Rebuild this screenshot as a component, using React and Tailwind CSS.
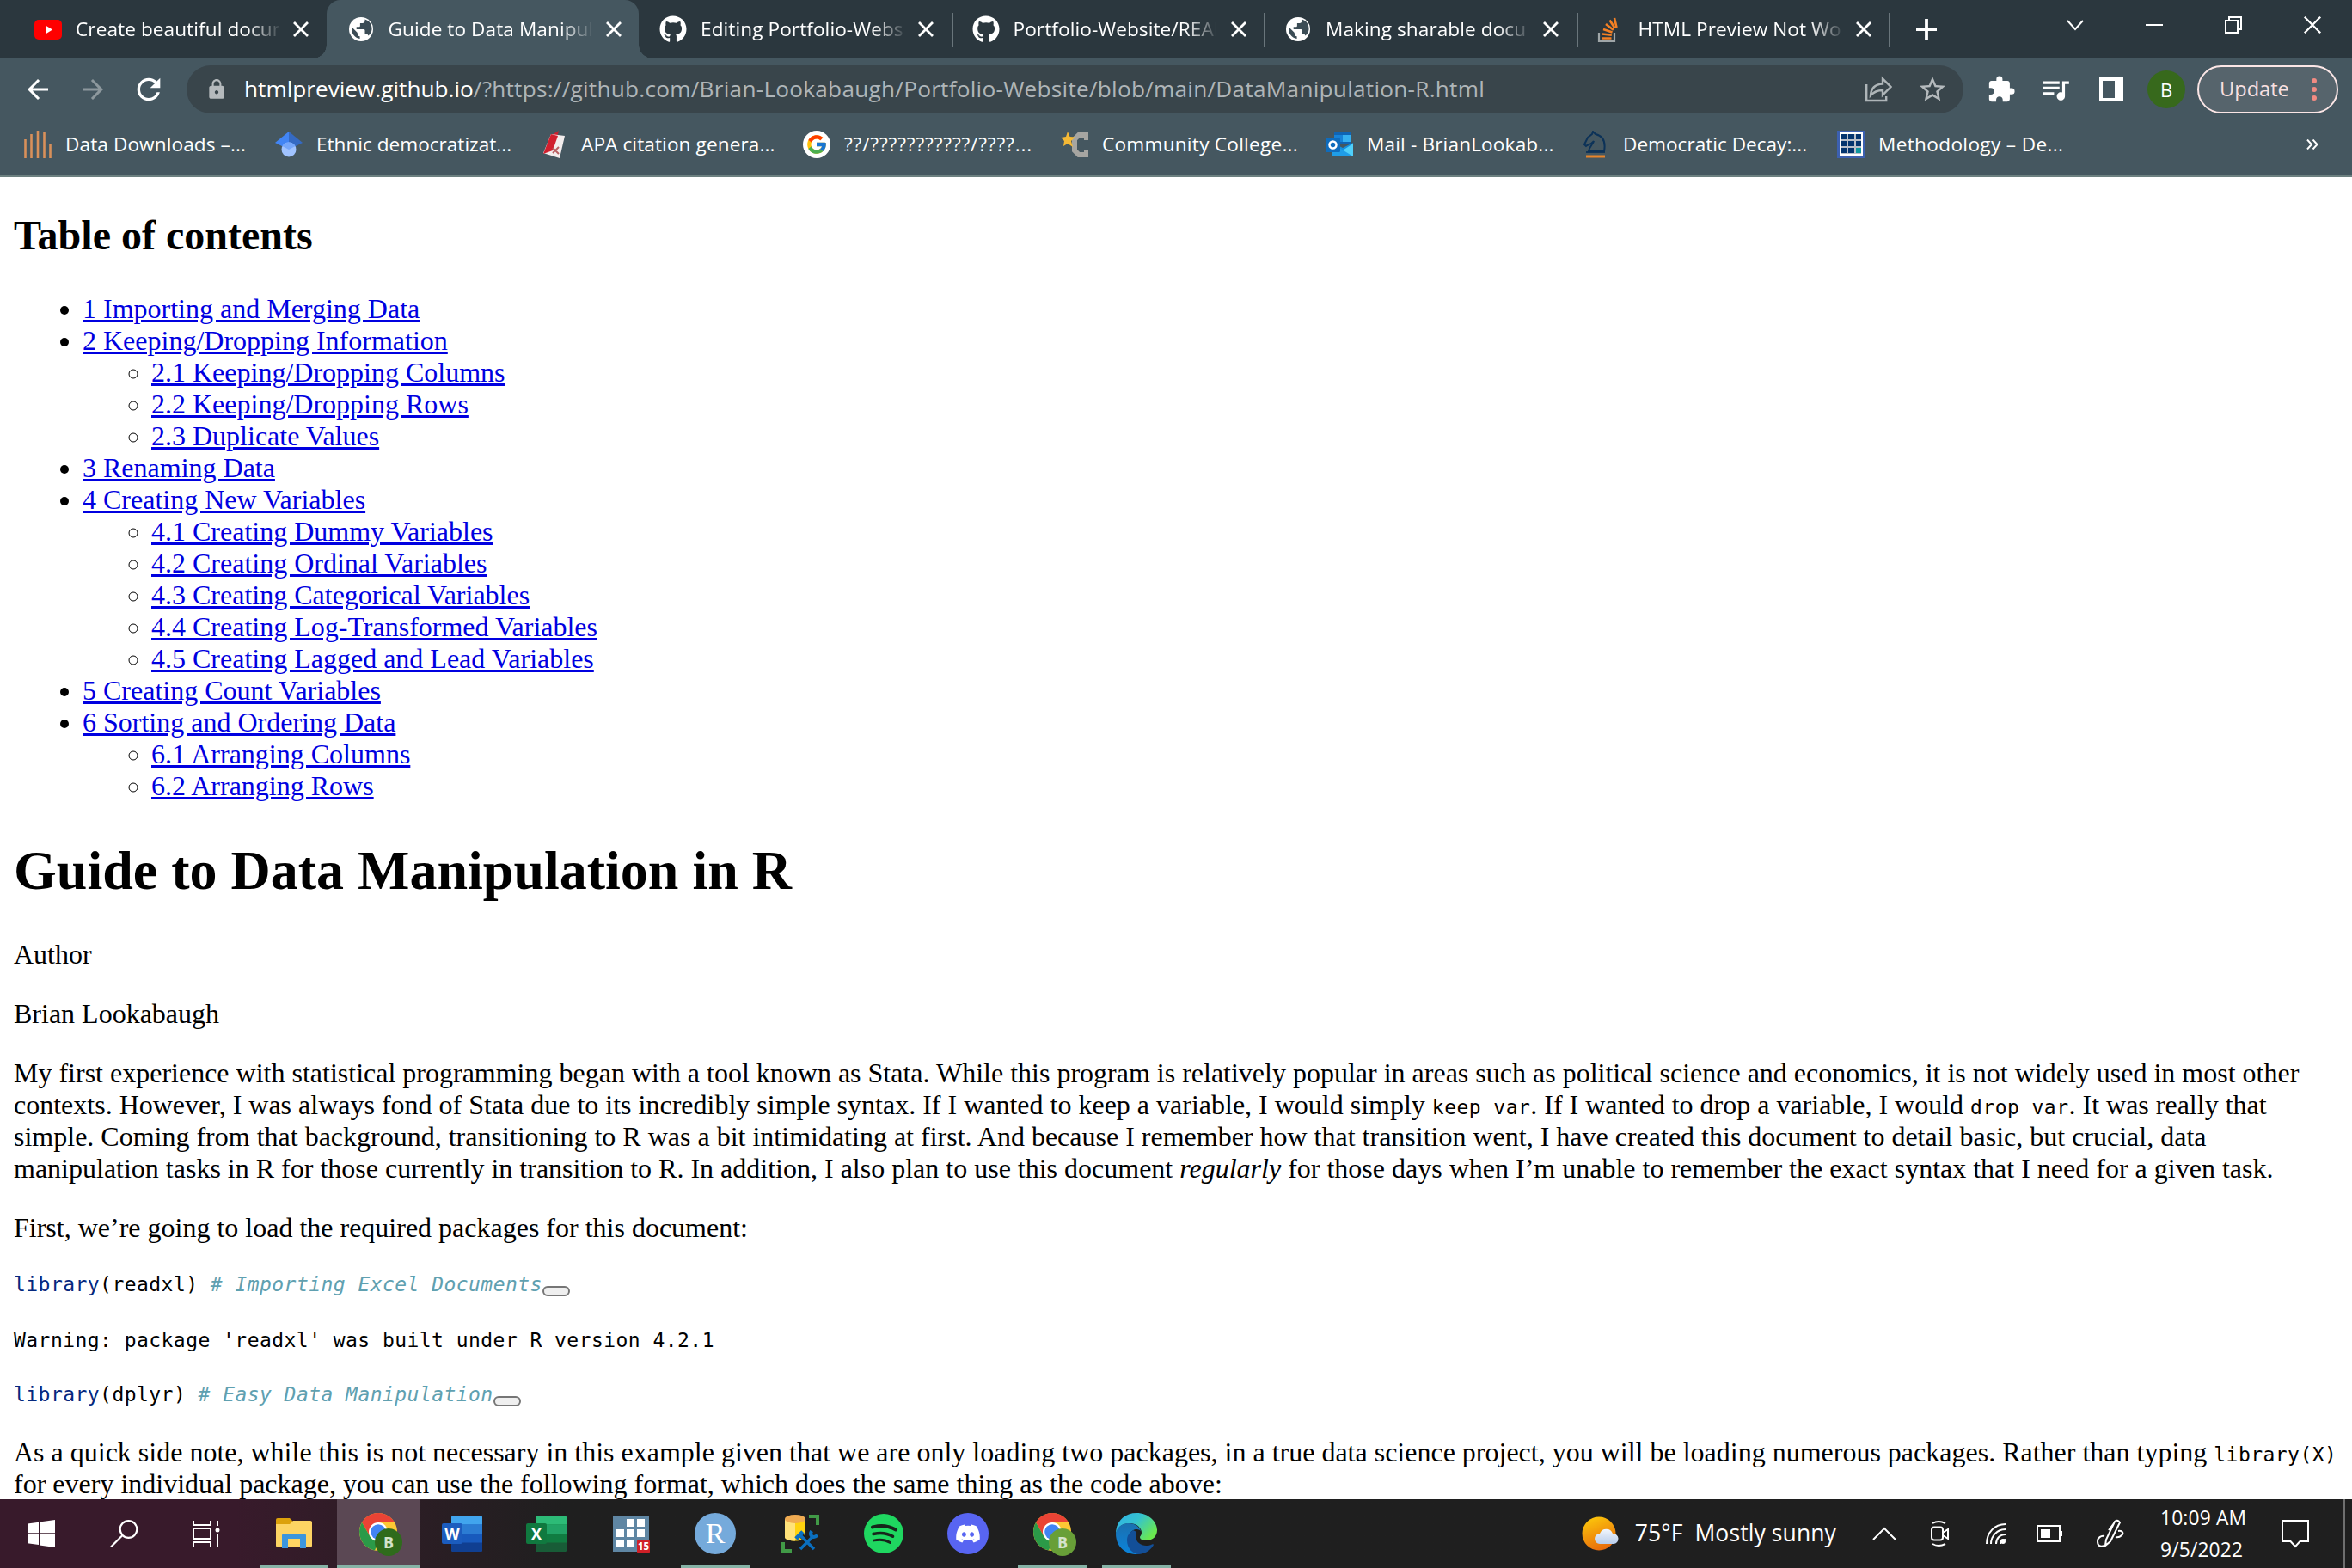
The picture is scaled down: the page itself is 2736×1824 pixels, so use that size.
import React from "react";
import { FaDiscord, FaGithub } from "react-icons/fa";
import { FcGoogle } from "react-icons/fc";
import {
  MdArrowBack,
  MdArrowForward,
  MdExtension,
  MdLock,
  MdQueueMusic,
  MdRefresh,
  MdStarBorder,
} from "react-icons/md";

function classNames(...classes) {
  return classes.filter(Boolean).join(" ");
}

const YoutubeIcon = () => (
  <svg viewBox="0 0 32 32" className="size-8">
    <rect x="0" y="5" width="32" height="23" rx="5" fill="#ff0000" />
    <path d="M13 11.500v10l8-5z" fill="#fff" />
  </svg>
);

const GlobeIcon = () => (
  <svg viewBox="0 0 32 32" className="size-8">
    <circle cx="16" cy="16" r="14" fill="#fff" />
    <path
      d="M20.500 4.500v1.800c0 1.500-1.200 2.800-2.800 2.800h-2.800v2.800c0 .8-.6 1.400-1.400 1.400h-2.800V16h8.400c.8 0 1.400.6 1.400 1.400v4.200h1.400c1.300 0 2.300.8 2.700 1.900a11 11 0 0 0-4.100-19zM5.300 13.500A11.200 11.200 0 0 0 14.600 27v-2.700c-1.500 0-2.800-1.200-2.800-2.800v-1.400z"
      fill="#3b4c55"
    />
  </svg>
);

const StackIcon = () => (
  <svg viewBox="0 0 32 32" className="size-8">
    <path d="M2 20v10h18V20" fill="none" stroke="#9fa6a8" strokeWidth="2.200" />
    <g stroke="#f48024" strokeWidth="2.600">
      <path d="M5.500 26.500h11M5.800 21.500l11 1.200M7 16l10.500 3.500M10 10l8.800 6.800M14.500 5.500l6 9.300M20 3l2.500 11" />
    </g>
  </svg>
);

const tabs = [
  { title: "Create beautiful documents", icon: <YoutubeIcon /> },
  { title: "Guide to Data Manipulation", icon: <GlobeIcon />, active: true },
  {
    title: "Editing Portfolio-Website",
    icon: <FaGithub className="size-8" />,
    divider: true,
  },
  {
    title: "Portfolio-Website/README",
    icon: <FaGithub className="size-8" />,
    divider: true,
  },
  { title: "Making sharable documents", icon: <GlobeIcon />, divider: true },
  { title: "HTML Preview Not Working", icon: <StackIcon />, divider: true },
];

const Cross = ({ className }) => (
  <svg
    viewBox="0 0 20 20"
    className={className}
    fill="none"
    stroke="currentColor"
  >
    <path d="M2 2l16 16M18 2L2 18" />
  </svg>
);

const TabStrip = () => (
  <div className="flex h-[68px] bg-[#2b373e] pl-4 text-white">
    {tabs.map((tab) => (
      <div
        key={tab.title}
        className={classNames(
          "relative flex h-[68px] w-[363.500px] shrink-0 items-center pl-6",
          tab.active && "rounded-t-2xl bg-[#455760]"
        )}
      >
        {tab.active && (
          <>
            <span className="absolute bottom-0 -left-4 size-4 bg-[radial-gradient(circle_at_0_0,transparent_15.500px,#455760_16px)]" />
            <span className="absolute -right-4 bottom-0 size-4 bg-[radial-gradient(circle_at_100%_0,transparent_15.500px,#455760_16px)]" />
          </>
        )}
        {tab.icon}
        <span className="ml-4 w-[236px] overflow-hidden text-[22.600px] tracking-[0.080px] whitespace-nowrap [mask-image:linear-gradient(to_right,black_200px,transparent_240px)]">
          {tab.title}
        </span>
        <Cross className="ml-[16px] size-5 stroke-[2.800]" />
        {tab.divider && (
          <span className="absolute top-[15px] -right-0.5 h-10 w-0.5 bg-[#69757b]" />
        )}
      </div>
    ))}
    <svg
      viewBox="0 0 24 24"
      className="mt-[22px] ml-[32px] size-6 stroke-white stroke-[3.800]"
    >
      <path d="M12 0v24M0 12h24" />
    </svg>
    <div className="mt-[19px] ml-auto flex h-5 gap-[72px] pr-[36px]">
      <svg
        viewBox="0 0 20 20"
        className="size-5 fill-none stroke-white stroke-2"
      >
        <path d="M1 5l9 10 9-10" />
      </svg>
      <svg viewBox="0 0 20 20" className="size-5 stroke-white stroke-2">
        <path d="M0 10h20" />
      </svg>
      <svg
        viewBox="0 0 20 20"
        className="size-5 fill-none stroke-white stroke-2"
      >
        <path d="M1 5h14v14H1zM5 5V1h14v14h-4" />
      </svg>
      <Cross className="size-5 scale-115 stroke-2" />
    </div>
  </div>
);

const Toolbar = () => (
  <div className="flex h-[72px] items-center pr-4 pl-[26px] text-white">
    <MdArrowBack className="size-9" />
    <MdArrowForward className="ml-7 size-9 text-[#8d989d]" />
    <MdRefresh className="ml-[27px] size-10" />
    <div className="ml-6 flex h-14 w-[2067px] items-center rounded-full bg-[#39454b] pl-[22px]">
      <MdLock className="size-[26px] text-[#b5babd]" />
      <span className="ml-[19px] text-[26.200px] tracking-[0.250px] whitespace-nowrap text-[#afb5b8]">
        <span className="tracking-normal text-white">
          htmlpreview.github.io
        </span>
        /?https://github.com/Brian-Lookabaugh/Portfolio-Website/blob/main/DataManipulation-R.html
      </span>
      <svg
        viewBox="0 0 32 32"
        className="mr-[29px] ml-auto size-8 fill-none stroke-[#aeb5b8] stroke-[2.400]"
      >
        <path d="M2.200 10v19h23v-5" />
        <path d="M7 23c.5-8 5-13 14-13.500V3.500l9.500 9.500-9.500 9.500V17c-6 0-10.500 2-14 6z" />
      </svg>
      <MdStarBorder className="mr-[18px] size-[36px] text-[#b5babd]" />
    </div>
    <MdExtension className="ml-[27px] size-[34px]" />
    <MdQueueMusic className="ml-[27px] size-[38px]" />
    <svg viewBox="0 0 28 28" className="ml-8 size-7">
      <path d="M0 0h28v28H0zM4 4v20h14V4z" fill="#fff" fillRule="evenodd" />
    </svg>
    <span className="ml-7 flex size-11 items-center justify-center rounded-full bg-[#37691c] text-[22px]">
      B
    </span>
    <div className="ml-auto flex h-14 w-[164px] items-center rounded-full border-2 border-[#fbe6e6] bg-[#56646c] pl-6 text-[#f8dfdf]">
      <span className="text-[23.600px]">Update</span>
      <span className="mr-[23px] ml-auto flex flex-col gap-1">
        <i className="size-1.5 rounded-full bg-[#f28b82]" />
        <i className="size-1.5 rounded-full bg-[#f28b82]" />
        <i className="size-1.5 rounded-full bg-[#f28b82]" />
      </span>
    </div>
  </div>
);

const bookmarks = [
  {
    title: "Data Downloads –...",
    width: "w-[292px]",
    icon: (
      <path
        d="M1.500 10v22M8.500 4v28M16 0v32M23.500 2v30M30.500 15v17"
        stroke="#d8905a"
        strokeWidth="2.600"
      />
    ),
  },
  {
    title: "Ethnic democratizat...",
    width: "w-[308px]",
    tracking: "tracking-normal",
    icon: (
      <>
        <path d="M16 1v21L0 14z" fill="#4285f4" />
        <path d="M16 1v21l16-8z" fill="#356ac3" />
        <circle cx="16" cy="22" r="8.500" fill="#a0c3ff" />
        <path d="M8.500 18a8.500 8.500 0 0 1 15 0l-7.500 4z" fill="#76a7fa" />
      </>
    ),
  },
  {
    title: "APA citation genera...",
    width: "w-[306px]",
    icon: (
      <>
        <path d="M14 5l8-5-2 8z" fill="#c8202f" />
        <path d="M13 4l16 2-6 26L4 26z" fill="#f3eded" />
        <path d="M13 4l8 2-6 17-11 4z" fill="#d11f2e" />
        <path d="M15 20l7 7M22 19l-7 7" stroke="#b85f62" strokeWidth="2" />
      </>
    ),
  },
  {
    title: "??/???????????/????...",
    width: "w-[300px]",
    tracking: "tracking-[0.860px]",
    icon: (
      <>
        <circle cx="16" cy="16" r="16" fill="#fff" />
        <svg x="3" y="3" width="26" height="26" viewBox="0 0 48 48">
          <FcGoogle size={48} />
        </svg>
      </>
    ),
  },
  {
    title: "Community College...",
    width: "w-[308px]",
    tracking: "tracking-[0.250px]",
    icon: (
      <>
        <path
          d="M30 11V5h-9l-5 5v13l5 5h9v-6"
          fill="none"
          stroke="#a6a5a1"
          strokeWidth="6"
        />
        <path
          d="M8 1l2.500 6 6 .5-4.500 4.500 2 7-6-4-5 3 1-6L0 8l6-1z"
          fill="#f5b935"
        />
      </>
    ),
  },
  {
    title: "Mail - BrianLookab...",
    width: "w-[298px]",
    tracking: "tracking-[0.160px]",
    icon: (
      <>
        <path d="M10 2h20v13H10z" fill="#0f64b4" />
        <path d="M10 5h10v8H10z" fill="#1682d8" />
        <path d="M20 5h10v8H20z" fill="#36b0f0" />
        <path d="M8 14l12 6 12-6v16H8z" fill="#1490df" />
        <path d="M32 15v15H9z" fill="#50d0fa" />
        <path d="M8 15v15h24z" fill="#1f9de8" />
        <rect y="8" width="17" height="17" rx="1.500" fill="#0f6cbd" />
        <circle
          cx="8.500"
          cy="16.500"
          r="4"
          fill="none"
          stroke="#fff"
          strokeWidth="2.500"
        />
      </>
    ),
  },
  {
    title: "Democratic Decay:...",
    width: "w-[297px]",
    tracking: "tracking-normal",
    icon: (
      <>
        <path
          d="M8 24c1-6 5-8 6-12-3 4-6 4-9 6l-2-2 4-8 5-4 1-3 3 3c9 2 12 9 10 20z"
          fill="none"
          stroke="#0c3258"
          strokeWidth="2"
        />
        <path d="M5 25h22" stroke="#0c3258" strokeWidth="1.800" />
        <path d="M5 30h22" stroke="#e8852a" strokeWidth="3" />
      </>
    ),
  },
  {
    title: "Methodology – De...",
    width: "w-[300px]",
    tracking: "tracking-[0.350px]",
    icon: (
      <>
        <rect width="32" height="32" fill="#3c60b0" />
        <rect x="3" y="2" width="27" height="27" fill="#fff" />
        <rect x="5" y="4" width="23" height="23" fill="#b9bfc9" />
        <path
          d="M5 4h6v6H5zM13 4h7v6h-7zM22 4h6v6h-6zM5 12h6v6H5zM13 12h7v6h-7zM22 12h6v6h-6zM5 20h6v6H5zM13 20h7v6h-7z"
          fill="#04356f"
        />
        <path d="M22 20h6v6h-6z" fill="#0f97a0" />
      </>
    ),
  },
];

const BookmarksBar = () => (
  <div className="flex h-[66px] border-b-2 border-[#6c8080] pb-2 pl-7 text-white">
    {bookmarks.map((bookmark) => (
      <div
        key={bookmark.title}
        className={classNames(
          "flex shrink-0 items-center gap-4",
          bookmark.width
        )}
      >
        <svg viewBox="0 0 32 32" className="size-8 shrink-0">
          {bookmark.icon}
        </svg>
        <span
          className={classNames(
            "text-[22.600px] whitespace-nowrap",
            bookmark.tracking || "tracking-[0.100px]"
          )}
        >
          {bookmark.title}
        </span>
      </div>
    ))}
    <svg
      viewBox="0 0 14 12"
      className="mt-[22px] mr-[39px] ml-auto h-3 w-3.5 fill-none stroke-white stroke-2"
    >
      <path d="M1 .5l5 5.500-5 5.500M7.500 .5l5 5.500-5 5.500" />
    </svg>
  </div>
);

const contents = [
  { title: "1 Importing and Merging Data" },
  {
    title: "2 Keeping/Dropping Information",
    children: [
      "2.1 Keeping/Dropping Columns",
      "2.2 Keeping/Dropping Rows",
      "2.3 Duplicate Values",
    ],
  },
  { title: "3 Renaming Data" },
  {
    title: "4 Creating New Variables",
    children: [
      "4.1 Creating Dummy Variables",
      "4.2 Creating Ordinal Variables",
      "4.3 Creating Categorical Variables",
      "4.4 Creating Log-Transformed Variables",
      "4.5 Creating Lagged and Lead Variables",
    ],
  },
  { title: "5 Creating Count Variables" },
  {
    title: "6 Sorting and Ordering Data",
    children: ["6.1 Arranging Columns", "6.2 Arranging Rows"],
  },
];

const Link = ({ children }) => (
  <a href="#" className="text-[#0000e0] underline">
    {children}
  </a>
);

const Code = ({ children }) => (
  <code className="font-['DejaVu_Sans_Mono',monospace] text-[23px] leading-none tracking-[0.450px]">
    {children}
  </code>
);

const CodeLine = ({ name, comment }) => (
  <>
    <span className="text-[#06287e]">library</span>({name}){" "}
    <span className="text-[#60a0b0] italic">{comment}</span>
    <button className="mt-4 h-3 w-8 rounded-md border-2 border-[#767676] bg-[#efefef]" />
  </>
);

const Document = () => (
  <main className="h-[1538px] overflow-hidden bg-white px-4 pt-10 font-['Liberation_Serif',serif] text-[32px] leading-[37px] whitespace-nowrap text-black">
    <h2 className="text-5xl leading-[55px] font-bold">Table of contents</h2>
    <ul className="mt-10 list-disc pl-20">
      {contents.map((section) => (
        <li key={section.title}>
          <Link>{section.title}</Link>
          {section.children && (
            <ul className="list-[circle] pl-20">
              {section.children.map((child) => (
                <li key={child}>
                  <Link>{child}</Link>
                </li>
              ))}
            </ul>
          )}
        </li>
      ))}
    </ul>
    <h1 className="mt-[43px] text-[64px] leading-[73px] font-bold">
      Guide to Data Manipulation in R
    </h1>
    <p className="mt-[43px]">Author</p>
    <p className="mt-8">Brian Lookabaugh</p>
    <p className="mt-8">
      My first experience with statistical programming began with a tool known
      as Stata. While this program is relatively popular in areas such as
      political science and economics, it is not widely used in most other
      <br />
      contexts. However, I was always fond of Stata due to its incredibly simple
      syntax. If I wanted to keep a variable, I would simply{" "}
      <Code>keep var</Code>. If I wanted to drop a variable, I would{" "}
      <Code>drop var</Code>. It was really that
      <br />
      simple. Coming from that background, transitioning to R was a bit
      intimidating at first. And because I remember how that transition went, I
      have created this document to detail basic, but crucial, data
      <br />
      manipulation tasks in R for those currently in transition to R. In
      addition, I also plan to use this document <em>regularly</em> for those
      days when I’m unable to remember the exact syntax that I need for a given
      task.
    </p>
    <p className="mt-8">
      First, we’re going to load the required packages for this document:
    </p>
    <pre className="mt-8 flex h-[30px] items-center font-['DejaVu_Sans_Mono',monospace] text-[23px] leading-[30px] tracking-[0.450px]">
      <CodeLine name="readxl" comment="# Importing Excel Documents" />
    </pre>
    <pre className="mt-[35px] h-[30px] font-['DejaVu_Sans_Mono',monospace] text-[23px] leading-[30px] tracking-[0.450px]">
      Warning: package 'readxl' was built under R version 4.2.1
    </pre>
    <pre className="mt-[33px] flex h-[30px] items-center font-['DejaVu_Sans_Mono',monospace] text-[23px] leading-[30px] tracking-[0.450px]">
      <CodeLine name="dplyr" comment="# Easy Data Manipulation" />
    </pre>
    <p className="mt-[34px]">
      As a quick side note, while this is not necessary in this example given
      that we are only loading two packages, in a true data science project, you
      will be loading numerous packages. Rather than typing{" "}
      <Code>library(X)</Code>
      <br />
      for every individual package, you can use the following format, which does
      the same thing as the code above:
    </p>
  </main>
);

const ChromeIcon = ({ badge }) => (
  <svg viewBox="0 0 54 54" className="size-[54px] translate-x-0.5">
    <circle cx="25" cy="25" r="22" fill="#fcc934" />
    <path d="M6 14A22 22 0 0 1 44 14H25l-9.500 16.500z" fill="#ea4335" />
    <path
      d="M6 14l9.500 16.500 9.500 5.500-4 10.600A22 22 0 0 1 6 14z"
      fill="#2b9a48"
    />
    <circle cx="25" cy="25" r="11" fill="#fff" />
    <circle cx="25" cy="25" r="8.800" fill="#4184f3" />
    <circle cx="37" cy="37" r="16" fill={badge} />
    <text
      x="37"
      y="43.500"
      fontSize="18"
      fontWeight="700"
      textAnchor="middle"
      fill="#d4e3cc"
      fontFamily="Open Sans, sans-serif"
    >
      B
    </text>
  </svg>
);

const OfficeIcon = ({ letter, shades, tile }) => (
  <svg viewBox="0 0 48 48" className="size-12">
    <rect x="11" y="3" width="36" height="42" rx="2" fill={shades[2]} />
    <path
      d="M11 13.500V5a2 2 0 0 1 2-2h32a2 2 0 0 1 2 2v8.500z"
      fill={shades[0]}
    />
    <path d="M11 13.500h36V24H11z" fill={shades[1]} />
    <path
      d="M11 34.500h36V43a2 2 0 0 1-2 2H13a2 2 0 0 1-2-2z"
      fill={shades[3]}
    />
    <rect y="12" width="24" height="24" rx="2" fill={tile} />
    <text
      x="12"
      y="30.500"
      fontSize="18"
      fontWeight="700"
      textAnchor="middle"
      fill="#fff"
      fontFamily="Open Sans, sans-serif"
    >
      {letter}
    </text>
  </svg>
);

const apps = [
  {
    name: "explorer",
    bar: "w-20",
    icon: (
      <svg viewBox="0 0 48 48" className="size-12">
        <path d="M3 12V8q0-2 2-2h14l4 4v6H3z" fill="#dca10b" />
        <path
          d="M3 13h16l4-4h20q2 0 2 2v27q0 2-2 2H5q-2 0-2-2z"
          fill="#fdd463"
        />
        <path d="M10 41V26q0-2 2-2h24q2 0 2 2v15h-7V30H17v11z" fill="#3c96dd" />
      </svg>
    ),
  },
  {
    name: "chrome",
    active: true,
    bar: "w-24",
    icon: <ChromeIcon badge="#2f6b1c" />,
  },
  {
    name: "word",
    icon: (
      <OfficeIcon
        letter="W"
        shades={["#41a5ee", "#2b7cd3", "#185abd", "#103f91"]}
        tile="#1b5cbe"
      />
    ),
  },
  {
    name: "excel",
    icon: (
      <OfficeIcon
        letter="X"
        shades={["#2dbb77", "#21a366", "#107c41", "#185c37"]}
        tile="#10793f"
      />
    ),
  },
  {
    name: "tiles",
    icon: (
      <svg viewBox="0 0 48 48" className="size-12">
        <rect x="3" y="3" width="42" height="42" fill="#5f86a3" />
        <path
          d="M19 7h9v9h-9zM31 7h9v9h-9zM7 19h9v9H7zM19 19h9v9h-9zM31 19h9v9h-9zM7 31h9v9H7zM19 31h9v9h-9z"
          fill="#fff"
        />
        <rect x="31" y="31" width="15" height="16" rx="2" fill="#cf2027" />
        <text
          x="38.500"
          y="43"
          fontSize="11.500"
          fontWeight="700"
          textAnchor="middle"
          fill="#fff"
          fontFamily="Open Sans, sans-serif"
        >
          15
        </text>
      </svg>
    ),
  },
  {
    name: "rstudio",
    bar: "w-20",
    icon: (
      <span className="flex size-12 items-center justify-center rounded-full bg-[#75aadb] font-['Liberation_Serif',serif] text-[34px] leading-none text-white">
        R
      </span>
    ),
  },
  {
    name: "database",
    icon: (
      <svg viewBox="0 0 48 48" className="size-12">
        <path d="M7 7v21c0 6 24 6 24 0V7z" fill="#ffd20f" />
        <path d="M7 7v21c0 3 6 4.500 12 4.500V7z" fill="#ffe27a" />
        <ellipse cx="19" cy="7" rx="12" ry="5" fill="#efab52" />
        <path
          d="M35 4h10v10M5 34v10h10"
          fill="none"
          stroke="#419a47"
          strokeWidth="4"
        />
        <g stroke="#1e1e1e" strokeWidth="6">
          <path d="M25 41l15-15M41 41L25 25" />
        </g>
        <g stroke="#0a6fc0" strokeWidth="3.500" fill="none">
          <path d="M25 42l14-14M41 42L25 26" />
          <path d="M20 30l8-8" strokeWidth="5" />
          <path d="M38 21c-3 6 2 9 7 5" strokeWidth="4" />
        </g>
      </svg>
    ),
  },
  {
    name: "spotify",
    icon: (
      <svg viewBox="0 0 48 48" className="size-12">
        <circle cx="24" cy="24" r="23" fill="#1fd760" />
        <g fill="none" stroke="#17241b" strokeLinecap="round">
          <path d="M11 16.500c9-2.500 19-1.500 27 3" strokeWidth="4" />
          <path d="M12 24.500c8-2 16-1 22.500 2.800" strokeWidth="3.400" />
          <path d="M12.500 32c7-1.500 13.500-.8 19 2.500" strokeWidth="2.800" />
        </g>
      </svg>
    ),
  },
  {
    name: "discord",
    icon: (
      <span className="flex size-12 items-center justify-center rounded-full bg-[#5865f2] text-white">
        <FaDiscord className="size-[30px]" />
      </span>
    ),
  },
  { name: "chrome-2", bar: "w-20", icon: <ChromeIcon badge="#689f38" /> },
  {
    name: "edge",
    bar: "w-20",
    icon: (
      <svg viewBox="0 0 48 48" className="size-12">
        <defs>
          <linearGradient id="edgeTop" x1="0" y1="0" x2="1" y2="0.600">
            <stop offset="0" stopColor="#2fb0e8" />
            <stop offset="0.500" stopColor="#35c3cf" />
            <stop offset="1" stopColor="#6ae84f" />
          </linearGradient>
          <linearGradient id="edgeLeft" x1="0" y1="0" x2="0" y2="1">
            <stop offset="0" stopColor="#1b6fae" />
            <stop offset="1" stopColor="#0a84dc" />
          </linearGradient>
        </defs>
        <path
          d="M0 24C0 10 10 0 24 0s24 10 24 20c0 7-5 12-12 12-6 0-8-2-8-4 0-1 2-2 2-5 0-4-4-11-14-11S2 18 0 24z"
          fill="url(#edgeTop)"
        />
        <path
          d="M0 24C1 16 8 12 15 12c8 0 13 5 14 9-2-2-4-2-6-2-5 1-9 6-9 12 0 9 7 14 13 17C12 49 0 40 0 24z"
          fill="url(#edgeLeft)"
        />
        <path
          d="M20 20c-4 3-7 6-7 12 0 9 7 16 14 16 8-1 14-5 17-11 0-1-1-1-2-.5-8 4-19 0-19-10 0-2 .5-3 1-4.500z"
          fill="#134f98"
        />
      </svg>
    ),
  },
];

const Weather = () => (
  <div className="flex items-center text-white">
    <svg viewBox="0 0 44 40" className="mr-[18px] h-10 w-11">
      <defs>
        <linearGradient id="sun" x1="0.200" y1="0" x2="0.600" y2="1">
          <stop offset="0" stopColor="#fcc80b" />
          <stop offset="1" stopColor="#e8690b" />
        </linearGradient>
        <linearGradient id="cloud" x1="0" y1="0" x2="0" y2="1">
          <stop offset="0" stopColor="#f2f6fc" />
          <stop offset="1" stopColor="#b9cdeb" />
        </linearGradient>
      </defs>
      <circle cx="20" cy="20" r="19.500" fill="url(#sun)" />
      <path
        d="M21 32a6 6 0 0 1 0-12 8 8 0 0 1 15 0 6 6 0 0 1 1 12z"
        fill="url(#cloud)"
      />
    </svg>
    <span className="text-[26.500px] tracking-[0.100px] whitespace-pre">
      75°F  Mostly sunny
    </span>
  </div>
);

const Taskbar = () => (
  <footer className="flex h-20 bg-[#1f1f1f] bg-linear-to-r from-[#381a2b] from-10% via-[#1f1f1f] via-24% to-[#1f1f1f] text-white">
    <div className="flex h-20 w-24 items-center justify-center">
      <svg viewBox="0 0 32 32" className="size-8 fill-white">
        <path d="M0 4.500L13 2.800v12.500H0zM14 2.600L32 0v15.300H14zM0 16.500h13V29L0 27.300zM14 16.500h18V32l-18-2.600z" />
      </svg>
    </div>
    <div className="flex h-20 w-24 items-center justify-center">
      <svg
        viewBox="0 0 32 32"
        className="size-8 fill-none stroke-white stroke-[2.200]"
      >
        <circle cx="21.500" cy="11" r="9.800" />
        <path d="M14.500 18L1 31.500" />
      </svg>
    </div>
    <div className="flex h-20 w-24 items-center justify-center">
      <svg
        viewBox="0 0 32 32"
        className="size-8 fill-none stroke-white stroke-2"
      >
        <path d="M1 1v5h20V1M1 10h20v12H1zM1 31v-5h20v5M29 1v6M29 16v15" />
        <circle cx="29" cy="12" r="2.500" fill="#fff" stroke="none" />
      </svg>
    </div>
    <div className="ml-1.5 flex gap-0.5">
      {apps.map((app) => (
        <div
          key={app.name}
          className={classNames(
            "relative flex h-20 w-24 items-center justify-center",
            app.active && "bg-[#5b4854]"
          )}
        >
          {app.icon}
          {app.bar && (
            <span
              className={classNames(
                "absolute bottom-0 h-1 bg-[#86b3a6]",
                app.bar
              )}
            />
          )}
        </div>
      ))}
    </div>
    <div className="ml-auto flex">
      <Weather />
      <div className="ml-[42px] flex items-center">
        <svg
          viewBox="0 0 28 16"
          className="h-4 w-7 fill-none stroke-white stroke-2"
        >
          <path d="M1 15L14 2l13 13" />
        </svg>
        <svg
          viewBox="0 0 24 32"
          className="ml-[39px] h-8 w-6 fill-none stroke-white stroke-2"
        >
          <rect x="2" y="8.500" width="13" height="15" rx="3" />
          <path d="M15 15l6-4v11l-6-4M3 4q7-4 15 0M3 28q7 4 15 0" />
        </svg>
        <svg
          viewBox="0 0 26 26"
          className="ml-10 size-[26px] fill-none stroke-white stroke-2"
        >
          <path d="M2 25C2 12 11 2 24 2M7 25c0-9 7-17 17-17M13 25c0-6 4-11 11-11M18 25c0-3 2-5 6-5" />
          <circle cx="21" cy="22" r="3" fill="#fff" stroke="none" />
        </svg>
        <svg
          viewBox="0 0 30 20"
          className="ml-[34px] h-5 w-[30px] fill-none stroke-white stroke-2"
        >
          <path d="M1 1h26v18H1z" />
          <path d="M29 7v6" />
          <path d="M5 5h11v10H5z" fill="#fff" stroke="none" />
        </svg>
        <svg
          viewBox="0 0 32 34"
          className="ml-10 h-[34px] w-8 fill-none stroke-white stroke-2"
        >
          <path d="M10 31l1-7 10-21q3-3 6 1l-11 22zM20 5l-6 8M9 20c-4-1-8 2-8 6 0 5 3 7 8 5M25 14c5-1 7 3 4 5q-3 3-7 2" />
        </svg>
      </div>
      <div className="ml-[42px] flex w-[100px] flex-col justify-center text-[22.800px] leading-[37px] tracking-[0.150px] whitespace-nowrap">
        <span>10:09 AM</span>
        <span>9/5/2022</span>
      </div>
      <svg
        viewBox="0 0 32 34"
        className="mt-6 ml-[41px] h-[34px] w-8 fill-none stroke-white stroke-2"
      >
        <path d="M1 1h30v24h-9.500L16 31l-5.500-6H1z" />
      </svg>
      <div className="mr-2 ml-10 w-0.5 bg-[#6f6f6f]" />
    </div>
  </footer>
);

const App = () => {
  return (
    <div className="h-[1824px] w-[2736px] overflow-hidden bg-[#455760] font-['Open_Sans',sans-serif]">
      <TabStrip />
      <Toolbar />
      <BookmarksBar />
      <Document />
      <Taskbar />
    </div>
  );
};

export default App;
